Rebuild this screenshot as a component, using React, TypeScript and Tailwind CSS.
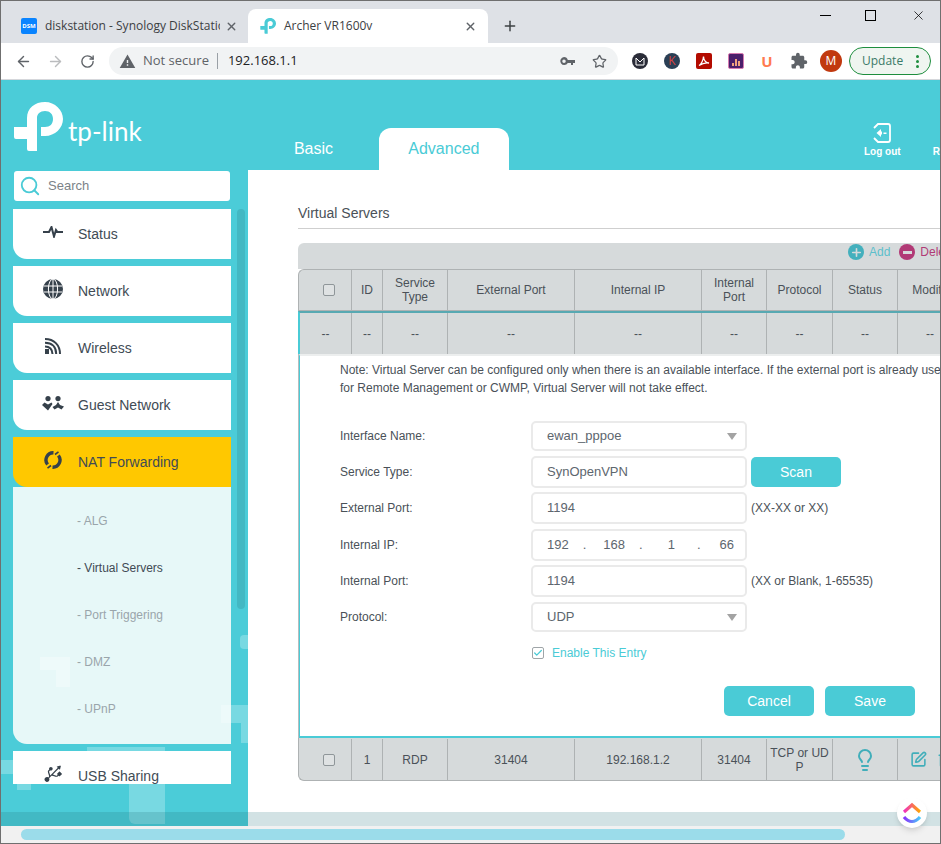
import { ArrowLeft, ArrowRight, RotateCw, Star, X, Plus, Lightbulb, SquarePen, Trash2, Check, Search } from "lucide-react";
import { MdExtension, MdWarning } from "react-icons/md";
import { FaUsb } from "react-icons/fa";
import type { ReactNode } from "react";

const arial = "font-['Liberation_Sans',Arial,sans-serif]";
const ui = "font-['Open_Sans','Noto_Sans',sans-serif]";
const headCols = "grid grid-cols-[53px_31px_65px_127px_127px_65px_66px_65px_64px]";
const editCols = "grid grid-cols-[52px_31px_65px_127px_127px_65px_66px_65px_64px]";

function TpMark({ color, size }: { color: string; size: number }) {
    return (
        <svg width={size} height={size} viewBox="0 0 50 50" fill="none">
            <path d="M1 25 H24 V49 H16 A2 2 0 0 1 14 47 V37 H3 A2 2 0 0 1 1 35 Z" fill={color} />
            <path d="M14 25 V16 C14 6 22 0 32 0 C42 0 50 8 50 17 C50 26 42 34 32 34 H28 V25 H32 C37 25 40 22 40 17 C40 12 37 9 32 9 C27 9 24 12 24 16 V25 Z" fill={color} />
        </svg>
    );
}

function StatusIcon() {
    return (
        <svg width="20" height="12" viewBox="0 0 20 12" fill="none" stroke="#36414b" strokeWidth="2">
            <path d="M0 6 H6 L8.5 1 L11 10.5 L13 4 L14.5 6 H20" />
        </svg>
    );
}

function GlobeIcon() {
    return (
        <svg width="20" height="20" viewBox="0 0 20 20" fill="none">
            <circle cx="10" cy="10" r="10" fill="#36414b" />
            <g stroke="#fff" strokeWidth="1">
                <path d="M1 7 H19 M1 13 H19 M10 0 V20" />
                <ellipse cx="10" cy="10" rx="4.6" ry="10" />
            </g>
        </svg>
    );
}

function WirelessIcon() {
    return (
        <svg width="16" height="16" viewBox="0 0 16 16" fill="none" stroke="#36414b" strokeWidth="2">
            <path d="M0 1 C9 1 15 7 15 16 M0 4.8 C7 4.8 11.2 9 11.2 16 M0 8.5 C4.6 8.5 7.5 11.4 7.5 16" />
            <rect x="0" y="11" width="4" height="5" fill="#36414b" stroke="none" />
        </svg>
    );
}

function GuestIcon() {
    return (
        <svg width="22" height="15" viewBox="0 0 22 15" fill="#36414b">
            <circle cx="6" cy="2.6" r="2.6" />
            <circle cx="16" cy="2.6" r="2.6" />
            <path d="M0 9 L2.5 6.5 L6 8.5 L9.5 6.5 L10.5 8 L6 14.5 Z" />
            <path d="M16 6 L18 9 L22 10.5 L19.5 13.5 L16 11.5 L12.5 13.5 L10.5 11 L14 9 Z" />
        </svg>
    );
}

function NatIcon() {
    return (
        <svg width="18" height="18" viewBox="0 0 18 18" fill="none" stroke="#36414b" strokeWidth="3.4">
            <path d="M3.6 13.5 A7.2 7.2 0 0 1 9.5 1.8" />
            <path d="M14.4 4.5 A7.2 7.2 0 0 1 8.5 16.2" />
            <path d="M11 3.5 L14.5 0.8 M7 14.5 L3.5 17.2" strokeWidth="1.6" />
        </svg>
    );
}

function LogoutIcon() {
    return (
        <svg width="18" height="20" viewBox="0 0 18 20" fill="none">
            <path d="M1 5 L5 1 H15 A2 2 0 0 1 17 3 V17 A2 2 0 0 1 15 19 H5 L1 15" stroke="#fff" strokeWidth="1.8" />
            <path d="M3.5 10 L8 6 V8.5 H9 V11.5 H8 V14 Z" fill="#fff" />
            <path d="M10.5 9.5 H13.5 V11 H10.5 Z" fill="#fff" />
        </svg>
    );
}

function KeyIcon() {
    return (
        <svg width="15" height="9" viewBox="0 0 15 9" fill="#5f6368">
            <path d="M4 0 A4 4 0 0 1 7.8 3 H15 V6 H13 V8 H11 V6 H7.8 A4 4 0 1 1 4 0 Z M4 2.5 A1.7 1.7 0 1 0 4 6 A1.7 1.7 0 1 0 4 2.5 Z" fillRule="evenodd" />
        </svg>
    );
}

function ClickUp() {
    return (
        <svg width="20" height="22" viewBox="0 0 20 22" fill="none" strokeWidth="3.2">
            <defs>
                <linearGradient id="cuTop" x1="0" x2="1" y1="0" y2="0">
                    <stop offset="0" stopColor="#f02fc2" />
                    <stop offset="1" stopColor="#ffa800" />
                </linearGradient>
                <linearGradient id="cuBottom" x1="0" x2="1" y1="0" y2="0">
                    <stop offset="0" stopColor="#8930fd" />
                    <stop offset="1" stopColor="#49ccf9" />
                </linearGradient>
            </defs>
            <path d="M2 10 L10 3 L18 10" stroke="url(#cuTop)" />
            <path d="M2 15 C7 21 13 21 18 15" stroke="url(#cuBottom)" />
        </svg>
    );
}

function ChromeBar() {
    return (
        <div className={`shrink-0 ${ui}`}>
            {/* Tab strip */}
            <div className="flex h-[42px] items-end bg-[#dee1e6]">
                <div className="flex h-[34px] w-[247px] items-center pl-5">
                    <div className="flex h-4 w-4 items-center justify-center rounded-[2px] bg-[#0a84ff] text-[6px] font-bold text-white">DSM</div>
                    <div className="ml-2 w-[175px] overflow-hidden whitespace-nowrap text-xs text-[#3c4043]">diskstation - Synology DiskStation</div>
                    <X size={13} strokeWidth={2.5} className="ml-[5px] text-[#5f6368]" />
                </div>
                <div className="flex h-[34px] w-[240px] items-center rounded-t-lg bg-white pl-3">
                    <TpMark color="#4acbd6" size={16} />
                    <div className="ml-2 text-xs text-[#3c4043]">Archer VR1600v</div>
                    <X size={13} strokeWidth={2.5} className="ml-[92px] text-[#5f6368]" />
                </div>
                <Plus size={16} strokeWidth={2.2} className="mb-[9px] ml-[14px] text-[#3c4043]" />
                <div className="ml-auto flex h-full items-start">
                    <div className="mr-[34px] mt-[14px] h-px w-[11px] bg-black" />
                    <div className="mr-[35px] mt-[9px] h-[11px] w-[11px] border border-black" />
                    <X size={15} strokeWidth={1.2} className="mr-[14px] mt-[7px] text-black" />
                </div>
            </div>
            {/* Toolbar */}
            <div className="flex h-[37px] items-center border-b border-[#d5d7db] bg-white">
                <ArrowLeft size={17} strokeWidth={2} className="ml-[14px] text-[#5f6368]" />
                <ArrowRight size={17} strokeWidth={2} className="ml-[15px] text-[#babcbe]" />
                <RotateCw size={15} strokeWidth={2.2} className="ml-[16px] text-[#5f6368]" />
                <div className="ml-[14px] flex h-7 w-[509px] items-center rounded-full bg-[#f1f3f4] pl-[10px] pr-[11px]">
                    <MdWarning size={17} className="text-[#5f6368]" />
                    <span className="ml-[7px] text-[13px] text-[#5f6368]">Not secure</span>
                    <div className="ml-2 h-[16px] w-px bg-[#9aa0a6]" />
                    <span className="ml-[10px] text-[13px] text-[#202124]">192.168.1.1</span>
                    <div className="ml-auto flex items-center gap-[17px]">
                        <KeyIcon />
                        <Star size={15} strokeWidth={2} className="text-[#5f6368]" />
                    </div>
                </div>
                <div className="ml-[14px] flex h-4 w-4 items-center justify-center rounded-full bg-[#2a2c38]">
                    <svg width="10" height="9" viewBox="0 0 10 9" fill="none" stroke="#fff" strokeWidth="1">
                        <path d="M1 1 V8 H9 V1 L5 5 Z" />
                    </svg>
                </div>
                <div className="ml-4 flex h-4 w-4 items-center justify-center rounded-full bg-[#2a3f55] text-[12px] text-[#d8433f]">K</div>
                <div className="ml-4 flex h-4 w-4 items-center justify-center rounded-[2px] bg-[#b30b00]">
                    <svg width="12" height="12" viewBox="0 0 12 12" fill="none" stroke="#fff" strokeWidth="1.3">
                        <path d="M1 10.5 C3 9.5 5.5 5 5.5 1.5 C5.5 5 8 8 11 8 C8 7.5 4 8.5 1 10.5 Z" />
                    </svg>
                </div>
                <div className="ml-4 flex h-4 w-4 items-end justify-center gap-px rounded-[2px] border border-[#d67ab0] bg-[#4a1f6b] pb-[2px]">
                    <div className="h-[3px] w-[2px] bg-[#f2a27e]" />
                    <div className="h-[7px] w-[2px] bg-[#f2a27e]" />
                    <div className="h-[5px] w-[2px] bg-[#f2a27e]" />
                </div>
                <div className="ml-[15px] w-4 text-center text-[15px] font-bold text-[#ff7a50]">U</div>
                <MdExtension size={18} className="ml-[15px] text-[#5f6368]" />
                <div className="ml-[12px] flex h-[22px] w-[22px] items-center justify-center rounded-full bg-[#c1390f] text-xs text-white">M</div>
                <div className="ml-[7px] flex h-7 w-[82px] items-center rounded-full border border-[#1e8e3e] bg-[#eff5f0] pl-[12px]">
                    <span className="text-xs text-[#3b7a68]">Update</span>
                    <div className="ml-[13px] flex flex-col gap-[2px]">
                        <div className="h-[3px] w-[3px] rounded-full bg-[#1e8e3e]" />
                        <div className="h-[3px] w-[3px] rounded-full bg-[#1e8e3e]" />
                        <div className="h-[3px] w-[3px] rounded-full bg-[#1e8e3e]" />
                    </div>
                </div>
            </div>
        </div>
    );
}

function MenuItem({ icon, label, active }: { icon: ReactNode; label: string; active?: boolean }) {
    return (
        <div className={`flex h-[50px] w-[218px] shrink-0 items-center rounded-bl-[14px] ${active ? "bg-[#ffc800]" : "bg-white"}`}>
            <div className="flex w-[65px] pb-1 pl-[29px]">
                <div className="flex w-[22px] justify-center">{icon}</div>
            </div>
            <span className="text-sm text-[#414b55]">{label}</span>
        </div>
    );
}

function Sidebar() {
    const subItems = ["ALG", "Virtual Servers", "Port Triggering", "DMZ", "UPnP"];

    return (
        <div className={`relative flex h-full w-[247px] shrink-0 flex-col ${arial}`}>
            {/* Faint background pattern */}
            <div className="absolute left-[239px] top-[555px] h-[14px] w-2 rounded-l-sm bg-white/25" />
            <div className="absolute left-[220px] top-[625px] z-20 h-[18px] w-[27px] bg-white/25" />
            <div className="absolute left-[240px] top-[643px] h-[20px] w-[7px] bg-white/25" />
            <div className="absolute left-[86px] top-[667px] h-[4px] w-[78px] bg-white/25" />
            <div className="absolute left-[128px] top-[671px] h-[73px] w-[36px] rounded-bl-md bg-white/25" />
            <div className="absolute left-0 top-[680px] h-[14px] w-3 bg-white/25" />
            <div className="absolute left-4 top-[704px] h-[6px] w-[14px] bg-white/25" />
            <div className="absolute left-[39px] top-[577px] z-20 h-[13px] w-[30px] bg-white/30" />
            <div className="absolute left-[55px] top-[590px] z-20 h-[17px] w-[14px] bg-white/30" />

            <div className="flex h-[91px] shrink-0 items-start pl-3 pt-[22px]">
                <TpMark color="#fff" size={50} />
                <span className="ml-[5px] mt-[11px] font-['Lato',sans-serif] text-[26px] leading-[36px] text-white">tp-link</span>
            </div>
            <div className="relative z-10 ml-[13px] flex h-[30px] w-[216px] shrink-0 items-center rounded-[3px] bg-white pl-[5px]">
                <Search size={22} strokeWidth={2} className="text-[#4acbd6]" />
                <span className="ml-[7px] text-[13px] text-[#7b8288]">Search</span>
            </div>
            <div className="relative z-10 mt-2 flex min-h-0 flex-1 pl-3">
                <div className="flex h-[575px] w-[218px] flex-col gap-[7px] overflow-hidden">
                    <MenuItem icon={<StatusIcon />} label="Status" />
                    <MenuItem icon={<GlobeIcon />} label="Network" />
                    <MenuItem icon={<WirelessIcon />} label="Wireless" />
                    <MenuItem icon={<GuestIcon />} label="Guest Network" />
                    <div className="shrink-0">
                        <MenuItem icon={<NatIcon />} label="NAT Forwarding" active />
                        <div className="flex h-[257px] flex-col rounded-bl-[14px] bg-[#e7f8f8] pt-[10px]">
                            {subItems.map((item) => (
                                <div
                                    key={item}
                                    className={`flex h-[47px] items-center pl-[64px] text-xs ${item === "Virtual Servers" ? "text-[#3f4a54]" : "text-[#9aa5ab]"}`}
                                >
                                    - {item}
                                </div>
                            ))}
                        </div>
                    </div>
                    <div className="flex h-[50px] w-[218px] shrink-0 items-center bg-white">
                        <div className="flex w-[65px] pb-[6px] pl-[29px]">
                            <div className="flex w-[22px] justify-center">
                                <FaUsb size={23} className="-rotate-45 text-[#36414b]" />
                            </div>
                        </div>
                        <span className="text-sm text-[#414b55]">USB Sharing</span>
                    </div>
                </div>
                <div className="ml-[6px] h-[400px] w-2 rounded-full bg-[#43b8c3]" />
            </div>
        </div>
    );
}

function FormRow({ label, height, children, hint, className }: { label: string; height: string; children: ReactNode; hint?: ReactNode; className?: string }) {
    return (
        <div className={`flex items-center ${height} ${className ?? ""}`}>
            <div className="w-[231px] pl-[40px] text-xs text-[#4a5158]">{label}</div>
            <div className="h-full w-[216px] shrink-0 rounded-[5px] border-2 border-[#eaeaea] bg-white">
                {children}
            </div>
            {hint}
        </div>
    );
}

function Value({ text, arrow }: { text: string; arrow?: boolean }) {
    return (
        <div className="flex h-full items-center justify-between pl-[14px] pr-[8px] text-[13px] text-[#5d666e]">
            <span>{text}</span>
            {arrow && <div className="h-0 w-0 border-x-[5.5px] border-t-[7px] border-x-transparent border-t-[#a3a3a3]" />}
        </div>
    );
}

function TableRow({ cells, className, cols }: { cells: ReactNode[]; className: string; cols: string }) {
    return (
        <div className={`${cols} w-[663px] ${className}`}>
            {cells.map((cell, i) => (
                <div key={i} className={`flex items-center justify-center px-[1px] text-center text-xs leading-[14px] text-[#4a5158] ${i < cells.length - 1 ? "border-r border-[#aeb2b3]" : ""}`}>
                    {cell}
                </div>
            ))}
        </div>
    );
}

function Box() {
    return <div className="ml-[8px] h-3 w-3 rounded-[2px] border border-[#8f9699] bg-[#dfe2e3]" />;
}

function Content() {
    return (
        <div className={`min-w-0 flex-1 overflow-hidden ${arial}`}>
            <div className="relative z-10 flex h-[90px] items-end">
                <div className="flex h-[42px] w-[131px] items-center justify-center text-base text-white">Basic</div>
                <div className="flex h-[42px] w-[130px] items-center justify-center rounded-t-xl bg-white text-base text-[#4acbd6]">Advanced</div>
                <div className="mb-[11px] ml-[355px] flex w-[37px] flex-col items-center gap-[1px]">
                    <LogoutIcon />
                    <span className="whitespace-nowrap text-[10px] font-bold text-white">Log out</span>
                </div>
                <span className="mb-[11px] ml-[32px] text-[10px] font-bold text-white">R</span>
            </div>
            <div className="h-[656px] bg-white pl-[50px] pt-[33px]">
                <div className="flex h-[26px] items-start border-b border-[#cfcfcf] text-sm leading-[20px] text-[#4a5158]">Virtual Servers</div>
                <div className="mt-[14px] w-[663px]">
                    <div className="flex h-[26px] items-start rounded-t-md bg-[#d6dadb] pl-[550px] pt-[1px]">
                        <div className="flex h-4 w-4 items-center justify-center rounded-full bg-[#44b0bd]">
                            <Plus size={13} strokeWidth={3} className="text-[#d6dadb]" />
                        </div>
                        <span className="ml-[5px] text-xs text-[#5cbfcb]">Add</span>
                        <div className="ml-[9px] flex h-4 w-4 items-center justify-center rounded-full bg-[#b13a76]">
                            <div className="h-[3px] w-[9px] bg-[#d6dadb]" />
                        </div>
                        <span className="ml-[5px] text-xs text-[#b13a76]">Delete</span>
                    </div>
                    <TableRow
                        className="h-[42px] rounded-tl-md border-y border-l border-[#aeb2b3] bg-[#d6dadb]"
                        cols={headCols}
                        cells={[<Box />, "ID", "Service Type", "External Port", "Internal IP", "Internal Port", "Protocol", "Status", "Modify"]}
                    />
                    <TableRow
                        className="h-[43px] border-l-2 border-t-2 border-l-[#4acbd6] border-t-[#58a9b2] bg-[#d6dadb]"
                        cols={editCols}
                        cells={["--", "--", "--", "--", "--", "--", "--", "--", "--"]}
                    />
                    <div className="border-l border-[#b9bdbe]">
                        <div className="h-[384px] border-b-2 border-l border-t-2 border-[#4acbd6] border-t-[#eceeee] bg-white">
                            <div className="whitespace-nowrap pl-[40px] pt-[5px] text-xs leading-[18px] text-[#4a5158]">
                                <div>Note: Virtual Server can be configured only when there is an available interface. If the external port is already used</div>
                                <div>for Remote Management or CWMP, Virtual Server will not take effect.</div>
                            </div>
                            <FormRow label="Interface Name:" height="h-[30px]" className="mt-[24px]">
                                <Value text="ewan_pppoe" arrow />
                            </FormRow>
                            <FormRow
                                label="Service Type:"
                                height="h-[32px]"
                                className="mt-[5px]"
                                hint={<div className="ml-1 flex h-[30px] w-[90px] items-center justify-center rounded-[5px] bg-[#4acbd6] text-sm text-white">Scan</div>}
                            >
                                <Value text="SynOpenVPN" />
                            </FormRow>
                            <FormRow
                                label="External Port:"
                                height="h-[32px]"
                                className="mt-1"
                                hint={<span className="ml-1 text-xs text-[#4a5158]">(XX-XX or XX)</span>}
                            >
                                <Value text="1194" />
                            </FormRow>
                            <FormRow label="Internal IP:" height="h-[32px]" className="mt-[5px]">
                                <div className="flex h-full items-center pl-[14px] text-[13px] text-[#5d666e]">
                                    <span>192</span>
                                    <span className="ml-[14px]">.</span>
                                    <span className="ml-[17px]">168</span>
                                    <span className="ml-[14px]">.</span>
                                    <span className="ml-[25px]">1</span>
                                    <span className="ml-[22px]">.</span>
                                    <span className="ml-[19px]">66</span>
                                </div>
                            </FormRow>
                            <FormRow
                                label="Internal Port:"
                                height="h-[32px]"
                                className="mt-1"
                                hint={<span className="ml-1 text-xs text-[#4a5158]">(XX or Blank, 1-65535)</span>}
                            >
                                <Value text="1194" />
                            </FormRow>
                            <FormRow label="Protocol:" height="h-[30px]" className="mt-[5px]">
                                <Value text="UDP" arrow />
                            </FormRow>
                            <div className="ml-[232px] mt-[13px] flex items-center">
                                <div className="flex h-3 w-3 items-center justify-center rounded-[2px] border border-[#9fa5a8]">
                                    <Check size={10} strokeWidth={3} className="text-[#4acbd6]" />
                                </div>
                                <span className="ml-[8px] text-xs text-[#4acbd6]">Enable This Entry</span>
                            </div>
                            <div className="ml-[424px] mt-[25px] flex gap-[11px]">
                                <div className="flex h-[30px] w-[90px] items-center justify-center rounded-[5px] bg-[#4acbd6] text-sm text-white">Cancel</div>
                                <div className="flex h-[30px] w-[90px] items-center justify-center rounded-[5px] bg-[#4acbd6] text-sm text-white">Save</div>
                            </div>
                        </div>
                    </div>
                    <TableRow
                        className="h-[43px] rounded-bl-md border-b border-l border-[#aeb2b3] bg-[#d6dadb] pt-px"
                        cols={headCols}
                        cells={[
                            <Box />,
                            "1",
                            "RDP",
                            "31404",
                            "192.168.1.2",
                            "31404",
                            <span className="break-all">TCP or UDP</span>,
                            <Lightbulb size={24} strokeWidth={2} className="text-[#41aeba]" />,
                            <div className="flex gap-[10px] self-center pl-[4px]">
                                <SquarePen size={17} strokeWidth={2.2} className="text-[#41aeba]" />
                                <Trash2 size={17} strokeWidth={2.2} className="text-[#41aeba]" />
                            </div>,
                        ]}
                    />
                </div>
            </div>
        </div>
    );
}

export default function App() {
    return (
        <div className="relative flex h-[844px] w-[941px] flex-col overflow-hidden border border-[#6f6f6f] bg-white">
            <ChromeBar />
            <div className="relative flex h-[746px] shrink-0 overflow-hidden bg-[#4bccd8]">
                <Sidebar />
                <Content />
                {/* Bottom band over the page */}
                <div className="absolute inset-x-0 bottom-0 z-20 h-[14px] bg-[#1e6f78]/20" />
            </div>
            {/* Page scrollbar */}
            <div className="flex h-[17px] shrink-0 items-center bg-[#f1f1f1] pl-5">
                <div className="h-[11px] w-[824px] rounded-full bg-[#9bdcea]" />
            </div>
            {/* ClickUp button */}
            <div className="absolute left-[896px] top-[797px] z-30 flex h-[30px] w-[30px] items-center justify-center rounded-full bg-white shadow-md">
                <ClickUp />
            </div>
        </div>
    );
}
